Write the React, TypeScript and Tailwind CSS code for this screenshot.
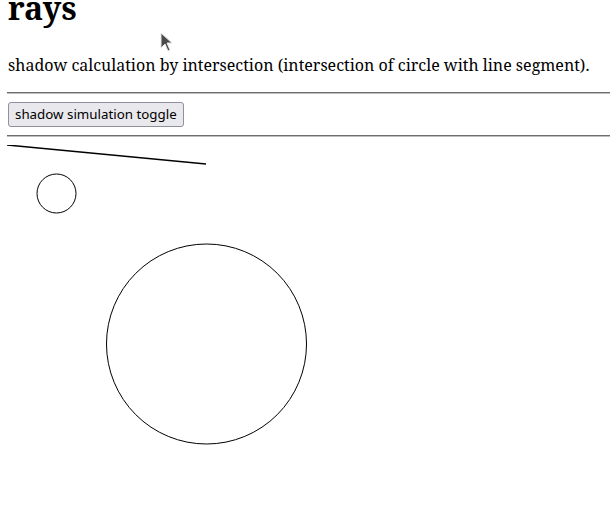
import React from 'react'

const Cursor: React.FC = () => (
    <svg className="absolute left-[160px] top-[32px]" width="14" height="22" viewBox="0 0 14 22">
        <path d="M1 1 L1 16 L5 12 L8 19 L10 18 L7 11 L12 11 Z" fill="#4a4a4a" stroke="#e5e5e5" strokeWidth="1" />
    </svg>
)

const Scene: React.FC = () => (
    <svg className="mt-[8px] ml-[-1px] block" width="400" height="320" viewBox="0 0 400 320">
        <line x1="0" y1="0" x2="199" y2="19" stroke="black" strokeWidth="1.5" />
        <circle cx="49.5" cy="48.5" r="19.5" fill="none" stroke="black" strokeWidth="1" />
        <circle cx="199.5" cy="199" r="100" fill="none" stroke="black" strokeWidth="1" />
    </svg>
)

const App: React.FC = () => {
    return (
        <div className="relative flex h-[505px] flex-col overflow-hidden bg-white px-[8px] font-['Noto_Serif',serif] text-black">
            <h1 className="mt-[-16px] mb-[21px] text-[32px] font-bold leading-normal">rays</h1>
            <p className="mb-[15px] text-[16px] leading-normal">shadow calculation by intersection (intersection of circle with line segment).</p>
            <hr className="mr-[-8px] ml-[-1px] border-t border-b border-t-[#6e6e6e] border-b-[#bdbdbd]" />
            <div className="flex py-[8px]">
                <button className="rounded-[3px] border border-[#8f8f9d] bg-[#e9e9ed] px-[6px] py-[2px] font-['Noto_Sans',sans-serif] text-[13.33px] leading-[19px] text-black">
                    shadow simulation toggle
                </button>
            </div>
            <hr className="mr-[-8px] ml-[-1px] border-t border-b border-t-[#6e6e6e] border-b-[#bdbdbd]" />
            <Scene />
            <Cursor />
        </div>
    )
}

export default App
